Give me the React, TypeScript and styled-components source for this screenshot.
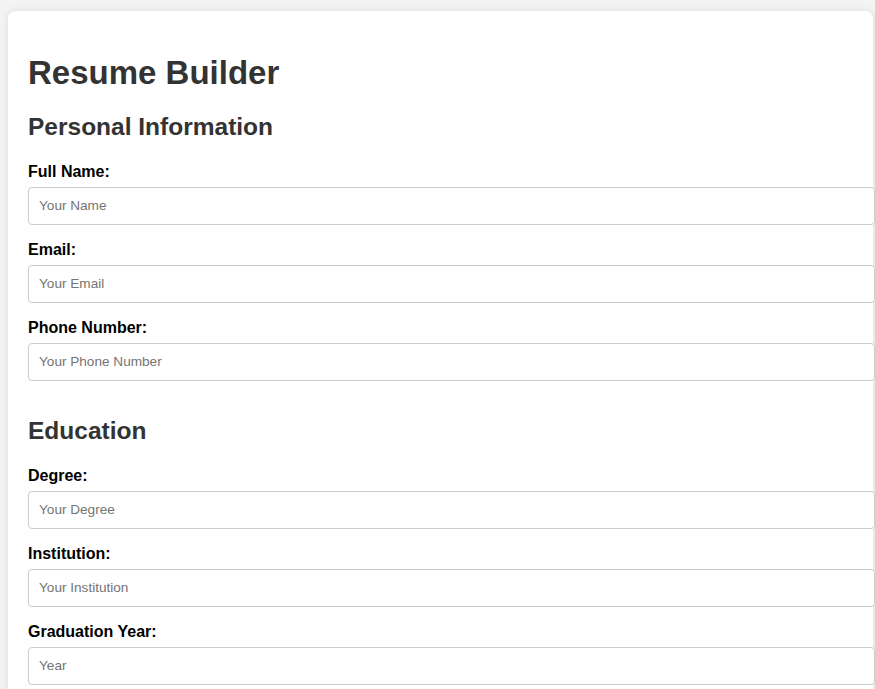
import React, { FC } from 'react';
import styled, { createGlobalStyle } from 'styled-components';

const GlobalStyle = createGlobalStyle`
	body {
		margin: 0;
		padding: 11px 2px 0 8px;
		background: #f4f4f4;
		font-family: Arial, 'Liberation Sans', sans-serif;
	}
`;

interface Field {
	id: string;
	label: string;
	placeholder: string;
}

const personal: Field[] = [
	{ id: 'name', label: 'Full Name:', placeholder: 'Your Name' },
	{ id: 'email', label: 'Email:', placeholder: 'Your Email' },
	{ id: 'phone', label: 'Phone Number:', placeholder: 'Your Phone Number' },
];

const education: Field[] = [
	{ id: 'degree', label: 'Degree:', placeholder: 'Your Degree' },
	{ id: 'institution', label: 'Institution:', placeholder: 'Your Institution' },
	{ id: 'year', label: 'Graduation Year:', placeholder: 'Year' },
];

const FormSection: FC<{ title: string; fields: Field[] }> = ({ title, fields }) => (
	<Section>
		<SectionTitle>{title}</SectionTitle>
		{fields.map((f) => (
			<React.Fragment key={f.id}>
				<Label htmlFor={f.id}>{f.label}</Label>
				<Input id={f.id} type="text" placeholder={f.placeholder} />
			</React.Fragment>
		))}
	</Section>
);

const App: FC = () => {
	return (
		<>
			<GlobalStyle />
			<Container>
				<Title>Resume Builder</Title>
				<FormSection title="Personal Information" fields={personal} />
				<FormSection title="Education" fields={education} />
			</Container>
		</>
	);
};

export default App;

const Container = styled.div`
	background: #fff;
	padding: 20px;
	border-radius: 8px;
	box-shadow: 0 0 10px rgba(0, 0, 0, 0.1);
	min-height: 700px;
`;

const Title = styled.h1`
	margin: 23px 0 22px;
	font-size: 33px;
	line-height: 37px;
	font-weight: 700;
	color: #333;
`;

const Section = styled.section`
	margin-bottom: 36px;
`;

const SectionTitle = styled.h2`
	margin: 0 0 20px;
	font-size: 24.5px;
	line-height: 28px;
	font-weight: 700;
	color: #333;
`;

const Label = styled.label`
	display: block;
	margin-bottom: 4px;
	font-size: 16px;
	line-height: 22px;
	font-weight: 700;
	color: #000;
`;

const Input = styled.input`
	display: block;
	width: 100%;
	padding: 10px;
	margin: 0 0 14px;
	border: 1px solid #ccc;
	border-radius: 4px;
	font-family: Arial, 'Liberation Sans', sans-serif;
	font-size: 13.6px;
	line-height: 16px;
	color: #333;

	&::placeholder {
		color: #757575;
	}
`;
